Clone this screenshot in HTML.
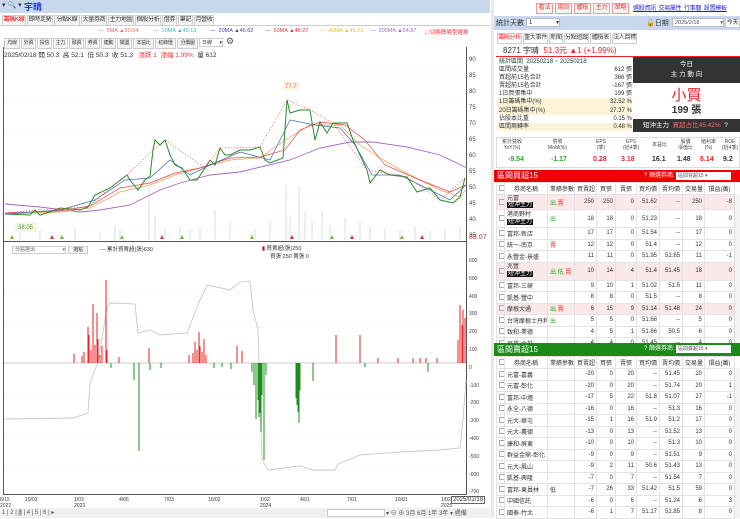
<!DOCTYPE html>
<html><head><meta charset="utf-8">
<style>
*{margin:0;padding:0;box-sizing:border-box}
body{width:740px;height:518px;overflow:hidden;background:#fff;font-family:"Liberation Sans","Noto Sans CJK TC",sans-serif;font-size:7px;color:#333;position:relative}
.a{position:absolute;white-space:nowrap}
.btn{position:absolute;border:1px solid #ccc;background:#f4f4f4;font-size:6px;line-height:9px;height:11px;text-align:center;white-space:nowrap;overflow:hidden;letter-spacing:-0.3px}
table{border-collapse:collapse;position:absolute;table-layout:fixed}
td{border:1px solid #e3e3e3;font-size:6px;text-align:right;padding:0 2px;overflow:hidden;white-space:nowrap}
td.l{text-align:left}
td.c{text-align:center}
tr.pk td{background:#fbe9ea}
.bk{background:#111;color:#fff;padding:0 1px}
.cb{display:inline-block;width:6px;height:6px;border:1px solid #aaa;vertical-align:middle}
</style></head><body>
<div class="a" style="left:0;top:0;width:490px;height:13px;background:#c9d8ee"></div>
<div class="a" style="left:2px;top:1px;font-size:7px;color:#333">▾ 🔍 ▾</div>
<div class="a" style="left:24px;top:0;font-size:9px;color:#1a3ad0;font-weight:bold">宇晴</div>
<div class="a" style="left:0;top:14px;width:490px;height:12px;border-bottom:1px solid #ccc"></div>
<div class="btn" style="left:2px;top:15px;width:24px;color:#e00">籌碼K線</div>
<div class="btn" style="left:27px;top:15px;width:26px">即時走勢</div>
<div class="btn" style="left:54px;top:15px;width:26px">分點K線</div>
<div class="btn" style="left:81px;top:15px;width:26px">大量券商</div>
<div class="btn" style="left:108px;top:15px;width:26px">主力地圖</div>
<div class="btn" style="left:135px;top:15px;width:26px">個股分析</div>
<div class="btn" style="left:162px;top:15px;width:15px">借券</div>
<div class="btn" style="left:178px;top:15px;width:15px">筆記</div>
<div class="btn" style="left:194px;top:15px;width:20px">月營收</div>
<div class="a" style="left:98px;top:28px;font-size:5.5px;color:#e66">— &nbsp;5MA ▲50.04</div>
<div class="a" style="left:153px;top:28px;font-size:5.5px;color:#3bb">— &nbsp;10MA ▲49.13</div>
<div class="a" style="left:210px;top:28px;font-size:5.5px;color:#44a">— &nbsp;20MA ▲46.62</div>
<div class="a" style="left:265px;top:28px;font-size:5.5px;color:#e33">— &nbsp;60MA ▲46.27</div>
<div class="a" style="left:320px;top:28px;font-size:5.5px;color:#eb3">— &nbsp;40MA ▲45.73</div>
<div class="a" style="left:370px;top:28px;font-size:5.5px;color:#a6c">— &nbsp;200MA ▲54.87</div>
<div class="a" style="left:425px;top:28px;font-size:5.5px;color:#e33">□ 切換簡易型選單</div>
<div class="btn" style="left:4px;top:38px;width:16px;font-size:5px">均線</div><div class="btn" style="left:21px;top:38px;width:15px;font-size:5px">外資</div><div class="btn" style="left:37px;top:38px;width:15px;font-size:5px">投信</div><div class="btn" style="left:53px;top:38px;width:15px;font-size:5px">主力</div><div class="btn" style="left:69px;top:38px;width:15px;font-size:5px">融資</div><div class="btn" style="left:85px;top:38px;width:15px;font-size:5px">券資</div><div class="btn" style="left:101px;top:38px;width:15px;font-size:5px">連動</div><div class="btn" style="left:117px;top:38px;width:15px;font-size:5px">擺盪</div><div class="btn" style="left:133px;top:38px;width:21px;font-size:5px">本益比</div><div class="btn" style="left:155px;top:38px;width:21px;font-size:5px">紅綠燈</div><div class="btn" style="left:177px;top:38px;width:21px;font-size:5px">分價圖</div>
<div class="a" style="left:199px;top:38px;width:24px;height:9px;border:1px solid #ccc;font-size:5px;padding-left:2px;line-height:8px">日線 <span style="float:right">▾</span></div>
<div class="a" style="left:226px;top:36px;font-size:9px;color:#555">⚙</div>
<div class="a" style="left:4px;top:49px;font-size:6.5px">2025/02/18 開 50.3 &nbsp;高 52.1 &nbsp;低 50.3 &nbsp;收 51.3 &nbsp; <span style="color:#e33">漲跌 1 &nbsp;漲幅 1.99%</span> &nbsp;量 612</div>
<div class="a" style="left:3px;top:47px;width:464px;height:448px;border-left:1px solid #555;border-right:1px solid #555;border-bottom:1px solid #555"></div>
<div class="a" style="left:3px;top:241px;width:464px;height:1px;background:#555"></div>
<svg class="a" style="left:0;top:0" width="490" height="518">
<g stroke="#f0f0f0" stroke-width="0.6">
<line x1="4" y1="72" x2="466" y2="72"/><line x1="4" y1="103" x2="466" y2="103"/><line x1="4" y1="135" x2="466" y2="135"/><line x1="4" y1="167" x2="466" y2="167"/><line x1="4" y1="199" x2="466" y2="199"/><line x1="4" y1="231" x2="466" y2="231"/>
<line x1="4" y1="291" x2="466" y2="291"/><line x1="4" y1="327" x2="466" y2="327"/><line x1="4" y1="398" x2="466" y2="398"/><line x1="4" y1="434" x2="466" y2="434"/><line x1="4" y1="470" x2="466" y2="470"/>
</g>
<g stroke="#c5dbea" stroke-width="0.8">
<path d="M20 240V232M40 240V230M60 240V234M75 240V228M100 240V233M115 240V225M120 240V230M149 240V186M155 240V215M165 240V228M180 240V226M190 240V230M200 240V226M215 240V210M230 240V222M255 240V228M270 240V220M286 240V185M290 240V215M299 240V186M305 240V212M312 240V222M322 240V210M330 240V225M345 240V218M360 240V222M370 240V226M385 240V228M400 240V230M415 240V226M430 240V231M445 240V229M460 240V226"/>
</g>
<polyline fill="none" stroke="#a565c0" stroke-width="0.9" points="5,204 40,207 80,212 100,210 130,205 160,190 180,183 210,175 240,172 290,160 320,148 350,142 373,142 407,147 440,155 467,168"/>
<polyline fill="none" stroke="#f29a50" stroke-width="0.7" points="5,214 60,212 90,208 120,192 150,185 175,175 200,168 230,160 260,158 285,140 310,125 340,125 360,145 380,158 410,175 440,190 460,197 466,190"/>
<polyline fill="none" stroke="#e44" stroke-width="0.7" points="5,213 60,211 90,206 120,188 150,183 175,173 200,168 230,158 260,157 285,150 300,130 320,122 345,125 365,140 385,165 420,180 450,192 466,185"/>
<polyline fill="none" stroke="#46b" stroke-width="0.7" points="5,214 60,210 95,200 125,180 150,178 170,160 190,175 210,165 240,152 270,160 290,120 315,125 340,128 355,145 372,175 400,175 430,190 450,200 466,185"/>
<polyline fill="none" stroke="#2a8a2a" stroke-width="1" points="5,214 30,215 35,210 40,215 50,212 60,208 80,210 88,207 95,195 110,188 127,175 130,180 138,190 145,180 150,176 153,150 155,140 160,145 165,140 170,155 175,165 182,168 190,180 197,180 205,168 210,160 215,165 220,148 225,155 230,155 240,150 250,150 260,147 265,160 270,163 283,158 287,100 290,113 300,110 310,110 315,140 320,122 327,133 333,123 347,123 353,140 367,170 370,183 380,170 390,175 407,177 417,192 430,188 440,200 453,203 460,197 465,178"/>
<polyline fill="none" stroke="#e33" stroke-width="0.7" stroke-dasharray="1,2" points="5,213 35,210 88,207 110,188 127,175 153,150 165,140 205,168 220,148 260,147 287,100 310,110 333,123 367,170 407,177 440,200 465,178"/>
<g fill="#7b3"><path d="M10 239l2-4 2 4zM60 239l2-4 2 4zM120 239l2-4 2 4zM180 239l2-4 2 4zM250 239l2-4 2 4zM330 239l2-4 2 4zM400 239l2-4 2 4z"/></g>
<g fill="#d33"><path d="M50 239l2-4 2 4zM160 239l2-4 2 4zM290 239l2-4 2 4zM350 239l2-4 2 4zM420 239l2-4 2 4z"/></g>
<rect x="283" y="82" width="16" height="8" fill="#fff8e0" stroke="#eee" stroke-width="0.5"/>
<text x="285" y="88" font-size="6" fill="#e55">77.7</text>
<rect x="16" y="223" width="20" height="8" fill="#f3ffe6" stroke="#ddd" stroke-width="0.5"/>
<text x="18" y="229" font-size="6" fill="#583">38.05</text>
<line x1="4" y1="363" x2="466" y2="363" stroke="#bbb" stroke-width="0.7"/>
<polyline fill="none" stroke="#c8c8c8" stroke-width="0.9" points="5,419 73,418 88,413 90,383 95,370 98,363 107,307 110,303 135,304 138,333 150,330 160,335 187,333 200,300 207,285 230,290 240,282 250,281 253,310 258,330 262,460 268,470 300,466 313,470 335,470 338,464 360,455 400,452 440,450 460,448 463,420 466,380"/>
<g stroke="#e22" stroke-width="1" shape-rendering="crispEdges">
<path d="M74 363V354M82 363V356M84 363V352M88 363V327M89 363V335M91 363V350M93 363V304M95 363V345M97 363V313M98 363V339M100 363V355M102 363V346M106 363V280M107 363V350M119 363V357M149 363V348M189 363V355M193 363V353M195 363V342M197 363V350M199 363V332M200 363V346M202 363V352M204 363V339M206 363V355M237 363V346M242 363V351M336 363V335M360 363V335M378 363V358M398 363V358M413 363V358M420 363V358M426 363V358M437 363V358M458 363V340M460 363V305M462 363V325M463 363V310M465 363V318"/>
</g>
<g stroke="#1c8c1c" stroke-width="1" shape-rendering="crispEdges">
<path d="M111 363V368M134 363V380M139 363V451M150 363V370M161 363V368M214 363V368M222 363V367M231 363V369M252 363V372M254 363V385M256 363V419M258 363V400M259 363V417M260 363V413M261 363V432M262 363V395M264 363V460M266 363V375M296 363V398M297 363V405M298 363V412M299 363V423M300 363V390M313 363V381M365 363V367M428 363V372"/>
</g>
</svg>
<div class="a" style="left:12px;top:246px;width:54px;height:8px;border:1px solid #ccc;font-size:5px;padding-left:2px;color:#666;line-height:7px">分點選出<span style="float:right">▾</span></div>
<div class="btn" style="left:68px;top:246px;width:20px;height:8px;font-size:5px;line-height:6px">選點</div>
<div class="a" style="left:100px;top:245px;font-size:5.5px">— 累計買賣超(張)630</div>
<div class="a" style="left:262px;top:244px;font-size:5.5px"><span style="color:#c00">▮</span> 買賣超(張)250</div>
<div class="a" style="left:270px;top:252px;font-size:5.5px">買張 250 賣張 0</div>
<div class="a" style="left:469px;top:52px;font-size:6px;line-height:16px;color:#444">90<br>85<br>80<br>75<br>70<br>65<br>60<br>55<br>50<br>45<br>40<br>35</div>
<div class="a" style="left:469px;top:234px;font-size:7px;color:#c33">33.07</div>
<div class="a" style="left:469px;top:253px;font-size:5px;line-height:17.8px;color:#444">600<br>500<br>400<br>300<br>200<br>100<br>0<br>-100<br>-200<br>-300<br>-400<br>-500<br>-600<br>-700</div>
<div class="a" style="left:0;top:497px;font-size:5px;line-height:6px;color:#444">8/15<br>2022</div>
<div class="a" style="left:25px;top:497px;font-size:5px">10/03</div>
<div class="a" style="left:74px;top:497px;font-size:5px;line-height:6px">1/03<br>2023</div>
<div class="a" style="left:119px;top:497px;font-size:5px">4/06</div>
<div class="a" style="left:164px;top:497px;font-size:5px">7/03</div>
<div class="a" style="left:208px;top:497px;font-size:5px">10/02</div>
<div class="a" style="left:260px;top:497px;font-size:5px;line-height:6px">1/02<br>2024</div>
<div class="a" style="left:300px;top:497px;font-size:5px">4/01</div>
<div class="a" style="left:347px;top:497px;font-size:5px">7/01</div>
<div class="a" style="left:395px;top:497px;font-size:5px">10/01</div>
<div class="a" style="left:441px;top:497px;font-size:5px;line-height:6px">1/02<br>2025</div>
<div class="a" style="left:451px;top:496px;border:1px solid #666;background:#fff;font-size:6px;padding:0 1px">2025/02/18</div>
<div class="a" style="left:0;top:508px;width:492px;height:10px;background:#f0f0f0"></div>
<div class="a" style="left:2px;top:509px;font-size:6px;color:#555">1 | 2 | <span style="background:#ccc">3</span> | 4 | 5 | 6 | ▸</div>
<div class="a" style="left:327px;top:509px;width:58px;height:8px;border:1px solid #ccc;background:#fff"></div>
<div class="a" style="left:386px;top:508px;font-size:6px;color:#555">▾ ⊖ ⊕ 3月 6月 1年 3年 ▾ 週備</div>
<div class="a" style="left:491px;top:0;width:3px;height:518px;background:#e8e8e8"></div>

<div class="btn" style="left:536px;top:3px;width:17px;color:#e33;border-color:#e99">看法</div>
<div class="btn" style="left:555px;top:3px;width:17px;color:#e33;border-color:#e99">期貨</div>
<div class="btn" style="left:574px;top:3px;width:17px;color:#e33;border-color:#e99">體檢</div>
<div class="btn" style="left:593px;top:3px;width:17px;color:#e33;border-color:#e99">主力</div>
<div class="btn" style="left:612px;top:3px;width:17px;color:#e33;border-color:#e99">策略</div>
<div class="a" style="left:633px;top:3px;font-size:6px;color:#22c;text-decoration:underline;letter-spacing:-0.3px">選股資訊 &nbsp;交易屬性 &nbsp;行事曆 &nbsp;設置模板</div>
<div class="a" style="left:494px;top:16px;width:246px;height:14px;background:#c9d8ee"></div>
<div class="a" style="left:496px;top:18px;font-size:7px">統計天數</div>
<div class="a" style="left:526px;top:18px;width:34px;height:9px;background:#fff;border:1px solid #bbb;font-size:6px;padding-left:2px;line-height:8px">1<span style="float:right">▾</span></div>
<div class="a" style="left:646px;top:18px;font-size:7px">🔓日期</div>
<div class="a" style="left:672px;top:18px;width:52px;height:9px;background:#fff;border:1px solid #bbb;font-size:5.5px;padding-left:2px;color:#555;line-height:8px">2025/2/18 <span style="float:right">▾</span></div>
<div class="btn" style="left:725px;top:18px;width:15px;background:#fff;height:10px;line-height:8px">今天</div>
<div class="btn" style="left:497px;top:33px;width:25px;color:#e33;background:#fff">籌碼分析</div>
<div class="btn" style="left:523px;top:33px;width:25px;background:#fff">重大事件</div>
<div class="btn" style="left:549px;top:33px;width:14px;background:#fff">新聞</div>
<div class="btn" style="left:564px;top:33px;width:25px;background:#fff">分點追蹤</div>
<div class="btn" style="left:590px;top:33px;width:21px;background:#fff">體檢表</div>
<div class="btn" style="left:612px;top:33px;width:25px;background:#fff">法人目標</div>
<div class="a" style="left:496px;top:44px;width:244px;height:13px;border-bottom:1px solid #e22"></div>
<div class="a" style="left:503px;top:45px;font-size:8px">8271 宇晴 &nbsp;<span style="color:#e22">51.3元 ▲1 (+1.99%)</span></div>
<div class="a" style="left:497px;top:58px;width:135px;font-size:6px;line-height:8.1px">
<div style="padding-left:2px">統計區間 &nbsp;20250218 ~ 20250218</div>
<div style="padding-left:2px">區間成交量<span style="float:right">612 張</span></div>
<div style="padding-left:2px">買超前15名合計<span style="float:right">366 張</span></div>
<div style="padding-left:2px">賣超前15名合計<span style="float:right">-167 張</span></div>
<div style="padding-left:2px">1日買張集中<span style="float:right">199 張</span></div>
<div style="padding-left:2px;background:#fdf3d6">1日籌碼集中(%)<span style="float:right">32.52 %</span></div>
<div style="padding-left:2px;background:#fdf3d6">20日籌碼集中(%)<span style="float:right">27.37 %</span></div>
<div style="padding-left:2px">佔股本比重<span style="float:right">0.15 %</span></div>
<div style="padding-left:2px;background:#fdf3d6">區間周轉率<span style="float:right">0.48 %</span></div>
</div>
<div class="a" style="left:633px;top:57px;width:107px;height:26px;background:#333;color:#fff;text-align:center;font-size:6.5px;line-height:10px;padding-top:3px">今日<br>主 力 動 向</div>
<div class="a" style="left:633px;top:84px;width:107px;text-align:center;font-size:15px;color:#e22">小買</div>
<div class="a" style="left:633px;top:101px;width:107px;text-align:center;font-size:10px;font-weight:bold">199 張</div>
<div class="a" style="left:633px;top:119px;width:107px;height:13px;background:#333;color:#fff;font-size:6.5px;line-height:13px;padding-left:10px">短沖主力 &nbsp;<span style="color:#f66">買超占比45.42%</span> &nbsp;?</div>
<div class="a" style="left:496px;top:137px;width:244px;height:31px;border:1px solid #ddd"></div>
<div class="a" style="left:496px;top:139px;width:244px;font-size:5px;color:#444;line-height:6px">
<span class="a" style="left:6px;text-align:center">累計營收<br>YoY(%)</span><span class="a" style="left:52px;text-align:center">營收<br>MoM(%)</span><span class="a" style="left:100px;text-align:center">EPS<br>(季)</span><span class="a" style="left:127px;text-align:center">EPS<br>(近4季)</span><span class="a" style="left:156px;top:3px">本益比</span><span class="a" style="left:182px;text-align:center">股價<br>淨值比</span><span class="a" style="left:205px;text-align:center">殖利率<br>(%)</span><span class="a" style="left:226px;text-align:center">ROE<br>(近4季)</span></div>
<div class="a" style="left:496px;top:156px;width:244px;font-size:7px;font-weight:bold">
<span class="a" style="left:12px;color:#2a2">-9.54</span><span class="a" style="left:55px;color:#2a2">-1.17</span><span class="a" style="left:97px;color:#e22">0.28</span><span class="a" style="left:125px;color:#e22">3.18</span><span class="a" style="left:156px">16.1</span><span class="a" style="left:181px">1.48</span><span class="a" style="left:204px;color:#e22">6.14</span><span class="a" style="left:227px">9.2</span></div>
<div class="a" style="left:494px;top:170px;width:246px;height:12px;background:#e00;color:#fff;font-size:8px;line-height:12px;padding-left:3px">區間買超15<span style="position:absolute;left:150px;font-size:6px">? 篩選券商:</span></div>
<div class="a" style="left:676px;top:172px;width:55px;height:8px;background:#fff;font-size:5px;padding-left:2px;color:#555;line-height:8px">區間買超15 ▾</div>
<table style="left:496px;top:182px;width:238px">
<colgroup><col style="width:8px"><col style="width:43px"><col style="width:27px"><col style="width:22px"><col style="width:19px"><col style="width:21px"><col style="width:23px"><col style="width:23px"><col style="width:22px"><col style="width:30px"></colgroup>
<tr style="height:12px"><td class="c"><span class="cb"></span></td><td class="c">券商名稱</td><td class="c">業績參數</td><td class="c">買賣超</td><td class="c">買張</td><td class="c">賣張</td><td class="c">買均價</td><td class="c">賣均價</td><td class="c">交易量</td><td class="c">損益(萬)</td></tr>
<tr class="pk" style="height:15px"><td class="c"><span class="cb"></span></td><td class="l" style="line-height:6px">元富<br><span class="bk">短沖主力</span></td><td class="l" style="color:#2a2">出.<span style="color:#e22">賣</span></td><td>250</td><td>250</td><td>0</td><td>51.62</td><td>--</td><td>250</td><td>-8</td></tr>
<tr style="height:18px"><td class="c"><span class="cb"></span></td><td class="l" style="line-height:7px">港商野村<br><span class="bk">短沖主力</span></td><td class="l" style="color:#2a2">出</td><td>18</td><td>18</td><td>0</td><td>51.23</td><td>--</td><td>18</td><td>0</td></tr>
<tr style="height:11.5px"><td class="c"><span class="cb"></span></td><td class="l">富邦-新店</td><td></td><td>17</td><td>17</td><td>0</td><td>51.54</td><td>--</td><td>17</td><td>0</td></tr>
<tr style="height:11.5px"><td class="c"><span class="cb"></span></td><td class="l">統一-南京</td><td class="l" style="color:#e22">賣</td><td>12</td><td>12</td><td>0</td><td>51.4</td><td>--</td><td>12</td><td>0</td></tr>
<tr style="height:11.5px"><td class="c"><span class="cb"></span></td><td class="l">永豐金-景盛</td><td></td><td>11</td><td>11</td><td>0</td><td>51.95</td><td>51.65</td><td>11</td><td>-1</td></tr>
<tr class="pk" style="height:18px"><td class="c"><span class="cb"></span></td><td class="l" style="line-height:7px">兆豐<br><span class="bk">短沖主力</span></td><td class="l" style="color:#2a2">出.低.<span style="color:#e22">賣</span></td><td>10</td><td>14</td><td>4</td><td>51.4</td><td>51.45</td><td>18</td><td>0</td></tr>
<tr style="height:11.5px"><td class="c"><span class="cb"></span></td><td class="l">富邦-三峽</td><td></td><td>9</td><td>10</td><td>1</td><td>51.02</td><td>51.5</td><td>11</td><td>0</td></tr>
<tr style="height:11.5px"><td class="c"><span class="cb"></span></td><td class="l">凱基-豐中</td><td></td><td>8</td><td>8</td><td>0</td><td>51.5</td><td>--</td><td>8</td><td>0</td></tr>
<tr class="pk" style="height:11.5px"><td class="c"><span class="cb"></span></td><td class="l">摩根大通</td><td class="l" style="color:#2a2">出.<span style="color:#e22">賣</span></td><td>6</td><td>15</td><td>9</td><td>51.14</td><td>51.48</td><td>24</td><td>0</td></tr>
<tr style="height:11.5px"><td class="c"><span class="cb"></span></td><td class="l">台灣摩根士丹利</td><td class="l" style="color:#2a2">出</td><td>5</td><td>5</td><td>0</td><td>51.68</td><td>--</td><td>5</td><td>0</td></tr>
<tr style="height:11.5px"><td class="c"><span class="cb"></span></td><td class="l">致和-業德</td><td></td><td>4</td><td>5</td><td>1</td><td>51.66</td><td>50.5</td><td>6</td><td>0</td></tr>
<tr style="height:11.5px"><td class="c"><span class="cb"></span></td><td class="l">高雄-北投</td><td></td><td>4</td><td>4</td><td>0</td><td>51.45</td><td>--</td><td>4</td><td>0</td></tr>
</table>
<div class="a" style="left:734px;top:194px;width:6px;height:149px;background:#f3f3f3;border-left:1px solid #ddd"></div>
<div class="a" style="left:494px;top:343px;width:246px;height:13px;background:#1a8a1a;color:#fff;font-size:8px;line-height:13px;padding-left:3px">區間賣超15<span style="position:absolute;left:150px;font-size:6px">? 篩選券商:</span></div>
<div class="a" style="left:676px;top:345px;width:55px;height:8px;background:#fff;font-size:5px;padding-left:2px;color:#555;line-height:8px">區間賣超15 ▾</div>
<table style="left:496px;top:356px;width:238px">
<colgroup><col style="width:8px"><col style="width:43px"><col style="width:27px"><col style="width:22px"><col style="width:19px"><col style="width:21px"><col style="width:23px"><col style="width:23px"><col style="width:22px"><col style="width:30px"></colgroup>
<tr style="height:12px"><td class="c"><span class="cb"></span></td><td class="c">券商名稱</td><td class="c">業績參數</td><td class="c">買賣超</td><td class="c">買張</td><td class="c">賣張</td><td class="c">買均價</td><td class="c">賣均價</td><td class="c">交易量</td><td class="c">損益(萬)</td></tr>
<tr style="height:11.5px"><td class="c"><span class="cb"></span></td><td class="l">元富-嘉義</td><td></td><td>-20</td><td>0</td><td>20</td><td>--</td><td>51.45</td><td>20</td><td>0</td></tr>
<tr style="height:11.5px"><td class="c"><span class="cb"></span></td><td class="l">元富-彰化</td><td></td><td>-20</td><td>0</td><td>20</td><td>--</td><td>51.74</td><td>20</td><td>1</td></tr>
<tr style="height:11.5px"><td class="c"><span class="cb"></span></td><td class="l">富邦-中壢</td><td></td><td>-17</td><td>5</td><td>22</td><td>51.8</td><td>51.07</td><td>27</td><td>-1</td></tr>
<tr style="height:11.5px"><td class="c"><span class="cb"></span></td><td class="l">永全-八德</td><td></td><td>-16</td><td>0</td><td>16</td><td>--</td><td>51.3</td><td>16</td><td>0</td></tr>
<tr style="height:11.5px"><td class="c"><span class="cb"></span></td><td class="l">元大-華屯</td><td></td><td>-15</td><td>1</td><td>16</td><td>51.9</td><td>51.2</td><td>17</td><td>0</td></tr>
<tr style="height:11.5px"><td class="c"><span class="cb"></span></td><td class="l">元大-農德</td><td></td><td>-13</td><td>0</td><td>13</td><td>--</td><td>51.52</td><td>13</td><td>0</td></tr>
<tr style="height:11.5px"><td class="c"><span class="cb"></span></td><td class="l">康和-屏東</td><td></td><td>-10</td><td>0</td><td>10</td><td>--</td><td>51.3</td><td>10</td><td>0</td></tr>
<tr style="height:11.5px"><td class="c"><span class="cb"></span></td><td class="l">群益金鼎-彰化</td><td></td><td>-9</td><td>0</td><td>9</td><td>--</td><td>51.51</td><td>9</td><td>0</td></tr>
<tr style="height:11.5px"><td class="c"><span class="cb"></span></td><td class="l">元大-鳳山</td><td></td><td>-9</td><td>2</td><td>11</td><td>50.6</td><td>51.43</td><td>13</td><td>0</td></tr>
<tr style="height:11.5px"><td class="c"><span class="cb"></span></td><td class="l">凱基-興隆</td><td></td><td>-7</td><td>0</td><td>7</td><td>--</td><td>51.54</td><td>7</td><td>0</td></tr>
<tr style="height:11.5px"><td class="c"><span class="cb"></span></td><td class="l">富邦-東員林</td><td class="l">低</td><td>-7</td><td>26</td><td>33</td><td>51.42</td><td>51.5</td><td>59</td><td>0</td></tr>
<tr style="height:11.5px"><td class="c"><span class="cb"></span></td><td class="l">中國信託</td><td></td><td>-6</td><td>0</td><td>6</td><td>--</td><td>51.24</td><td>6</td><td>3</td></tr>
<tr style="height:11.5px"><td class="c"><span class="cb"></span></td><td class="l">國泰-竹北</td><td></td><td>-6</td><td>1</td><td>7</td><td>51.17</td><td>51.85</td><td>8</td><td>0</td></tr>
</table>
<div class="a" style="left:734px;top:368px;width:6px;height:150px;background:#f3f3f3;border-left:1px solid #ddd"></div>
</body></html>
